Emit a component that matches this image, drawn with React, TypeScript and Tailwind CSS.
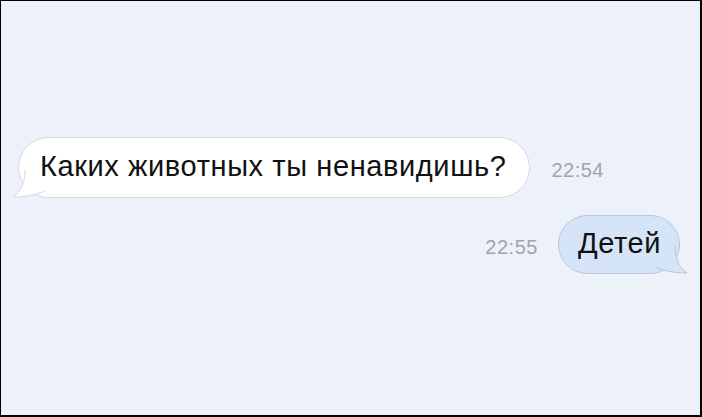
import React from 'react';

const FONT = { fontFamily: '"Liberation Sans", Arial, "Noto Sans", sans-serif' };

function InTail() {
  return (
    <svg
      className="absolute bottom-[-1px] left-[-8px]"
      width="40"
      height="30"
      viewBox="0 0 40 30"
    >
      <path d="M14 0 C14 14 10 24 2 29 C14 29 24 27 34 23 L34 0 Z" fill="#ffffff" />
      <path d="M14 2 C14 14 10 24 2 29 C14 29 24 27 34 23" fill="none" stroke="#d3d9e2" strokeWidth="1" />
    </svg>
  );
}

function OutTail() {
  return (
    <svg
      className="absolute bottom-[-1px] right-[-10px]"
      width="40"
      height="30"
      viewBox="0 0 40 30"
    >
      <path d="M26 0 C26 14 30 24 38 29 C26 29 16 27 6 23 L6 0 Z" fill="#d6e4f7" />
      <path d="M26 2 C26 14 30 24 38 29 C26 29 16 27 6 23" fill="none" stroke="#b7c6dc" strokeWidth="1" />
    </svg>
  );
}

export default function App() {
  return (
    <div
      className="h-[417px] w-[702px] overflow-hidden border-t border-l border-r-2 border-b-2 border-black bg-[#edf2fa]"
      style={FONT}
    >
      <div className="flex flex-col pt-[136px]">
        <div className="flex items-end pl-[17px]">
          <div className="relative flex h-[61px] items-center rounded-[31px] border border-[#d3d9e2] bg-white pb-[3px] pl-[21px] pr-[23px]">
            <InTail />
            <span className="relative text-[29px] leading-none tracking-[0.6px] text-[#111]">
              Каких животных ты ненавидишь?
            </span>
          </div>
          <span className="mb-[18px] ml-[21px] text-[20px] leading-none tracking-[0.5px] text-[#9ea4ad]">
            22:54
          </span>
        </div>

        <div className="mt-[17px] flex items-end justify-end pr-[20px]">
          <span className="mb-[17px] mr-[20px] text-[20px] leading-none tracking-[0.5px] text-[#9ea4ad]">
            22:55
          </span>
          <div className="relative flex h-[59px] items-center rounded-[30px] border border-[#b7c6dc] bg-[#d6e4f7] pb-[3px] pl-[19px] pr-[18px]">
            <OutTail />
            <span className="relative text-[29px] leading-none tracking-[0.6px] text-[#111]">Детей</span>
          </div>
        </div>
      </div>
    </div>
  );
}
